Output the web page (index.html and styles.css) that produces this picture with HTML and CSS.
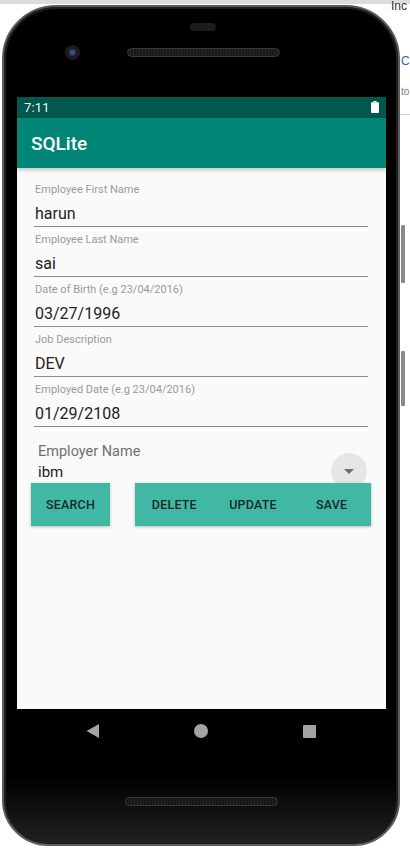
FILE: index.html
```html
<!DOCTYPE html>
<html>
<head>
<meta charset="utf-8">
<link rel="stylesheet" href="styles.css">
</head>
<body>
<div class="stage">
  <div class="bg-top"></div>
  <div class="bg-text t1">Inc</div>
  <div class="bg-text t2">C</div>
  <div class="bg-text t3">to</div>
  <div class="bg-rule"></div>
  <div class="phone">
    <div class="side-btn b1"></div>
    <div class="side-btn b2"></div>
    <div class="phone-top">
      <div class="sensor"></div>
      <div class="camera"><div class="lens"></div></div>
      <div class="earpiece"></div>
    </div>
    <div class="screen">
      <div class="statusbar">
        <span class="time">7:11</span>
        <svg class="battery" width="8" height="12" viewBox="0 0 8 12"><rect x="2.5" y="0" width="3" height="1.5" fill="#fff"/><rect x="0" y="1.2" width="8" height="10.8" rx="0.8" fill="#fff"/></svg>
      </div>
      <div class="appbar">SQLite</div>
      <div class="content">
        <div class="field">
          <div class="label">Employee First Name</div>
          <div class="value">harun</div>
        </div>
        <div class="field">
          <div class="label">Employee Last Name</div>
          <div class="value">sai</div>
        </div>
        <div class="field">
          <div class="label">Date of Birth (e.g 23/04/2016)</div>
          <div class="value">03/27/1996</div>
        </div>
        <div class="field">
          <div class="label">Job Description</div>
          <div class="value">DEV</div>
        </div>
        <div class="field">
          <div class="label">Employed Date (e.g 23/04/2016)</div>
          <div class="value">01/29/2108</div>
        </div>
        <div class="spinner">
          <div class="sp-label">Employer Name</div>
          <div class="sp-value">ibm</div>
          <div class="sp-circle"><svg width="10" height="5" viewBox="0 0 10 5"><path d="M0 0 L10 0 L5 5 Z" fill="#6e6e6e"/></svg></div>
        </div>
        <div class="buttons">
          <div class="btn">SEARCH</div>
          <div class="group">
            <div class="btn">DELETE</div>
            <div class="btn">UPDATE</div>
            <div class="btn">SAVE</div>
          </div>
        </div>
      </div>
    </div>
    <div class="navbar">
      <div class="nav-item"><svg width="14" height="14" viewBox="0 0 14 14"><path d="M0.5 7 L13 0 L13 14 Z" fill="#a3a3a3"/></svg></div>
      <div class="nav-item"><div class="home"></div></div>
      <div class="nav-item"><div class="recent"></div></div>
    </div>
    <div class="speaker"></div>
  </div>
</div>
</body>
</html>
```

FILE: styles.css
```css
html, body {
  margin: 0;
  padding: 0;
  background: #ffffff;
  font-family: Roboto, "Noto Sans", sans-serif;
}

.stage {
  position: relative;
  width: 410px;
  height: 852px;
  overflow: hidden;
  padding-top: 5px;
  box-sizing: border-box;
}

.bg-top {
  position: absolute;
  left: 0;
  top: 0;
  width: 410px;
  height: 4px;
  background: #dcdcdc;
}

.bg-text {
  position: absolute;
  font-family: "Liberation Sans", sans-serif;
  color: #333;
  line-height: 1;
}
.t1 { left: 391px; top: 0px; font-size: 12px; }
.t2 { left: 401px; top: 55px; font-size: 12px; color: #3f5f8f; }
.t3 { left: 401px; top: 87px; font-size: 10px; color: #777; }
.bg-rule {
  position: absolute;
  left: 400px;
  top: 114px;
  width: 10px;
  height: 1px;
  background: #ccc;
}

.phone {
  position: relative;
  margin-left: 2px;
  width: 398px;
  height: 841px;
  box-sizing: border-box;
  border: 2px solid #5c5c5c;
  border-radius: 54px 54px 46px 46px;
  background: linear-gradient(to bottom, #000 0%, #000 92%, #141414 97%, #222 100%);
  box-shadow: inset 0 0 0 2px #1e1e1e;
  padding-left: 13px;
}

.side-btn {
  position: absolute;
  right: -7px;
  width: 4px;
  background: #8a8a8a;
  border-radius: 1px;
}
.b1 { top: 218px; height: 58px; }
.b2 { top: 344px; height: 55px; }

.phone-top {
  position: relative;
  height: 90px;
  margin-left: -13px;
}

.sensor {
  position: absolute;
  left: 186px;
  top: 16px;
  width: 26px;
  height: 8px;
  border-radius: 4px;
  background: #1c1c1e;
}

.camera {
  position: absolute;
  left: 61px;
  top: 38px;
  width: 15px;
  height: 15px;
  border-radius: 50%;
  background: #1b1b22;
  display: flex;
  align-items: center;
  justify-content: center;
}
.lens {
  width: 5px;
  height: 5px;
  border-radius: 50%;
  background: #3b4c8f;
  box-shadow: 0 0 2px #5f73c4;
}

.earpiece {
  position: absolute;
  left: 123px;
  top: 41px;
  width: 153px;
  height: 9px;
  border-radius: 5px;
  background: repeating-linear-gradient(90deg, #1a1a1a 0 2px, #262626 2px 3px);
  border: 1px solid #3a3a3a;
  box-sizing: border-box;
}

.screen {
  width: 369px;
  height: 612px;
  background: #fafafa;
  display: flex;
  flex-direction: column;
}

.statusbar {
  height: 21px;
  background: #00574b;
  display: flex;
  align-items: center;
  justify-content: space-between;
  padding: 0 7px;
}
.time {
  color: #eef5f3;
  font-size: 13px;
  letter-spacing: 0.2px;
}
.battery { display: block; margin-top: -1px; }

.appbar {
  height: 50px;
  background: #008577;
  color: #ffffff;
  font-size: 19px;
  font-weight: 500;
  display: flex;
  align-items: center;
  padding-left: 14px;
  box-shadow: 0 2px 4px rgba(0,0,0,0.22);
  position: relative;
  z-index: 1;
}

.content {
  flex: 1;
  padding: 14px 18px 0 17px;
}

.field {
  margin-bottom: 5px;
  border-bottom: 1px solid #8a8a8a;
}
.label {
  height: 16px;
  line-height: 16px;
  font-size: 11px;
  color: #9a9a9a;
  padding-left: 1px;
}
.value {
  margin-top: 4px;
  height: 24px;
  line-height: 24px;
  font-size: 16px;
  color: #222222;
  padding-left: 1px;
}

.spinner {
  position: relative;
  margin-top: 16px;
  padding-left: 4px;
  height: 40px;
}
.sp-label {
  height: 18px;
  line-height: 18px;
  font-size: 14.5px;
  color: #6f6f6f;
}
.sp-value {
  margin-top: 2px;
  height: 18px;
  line-height: 18px;
  font-size: 15px;
  color: #222;
}
.sp-circle {
  position: absolute;
  left: 297px;
  top: 10px;
  width: 36px;
  height: 36px;
  border-radius: 50%;
  background: #e6e6e6;
  display: flex;
  align-items: center;
  justify-content: center;
}
.sp-circle svg { display: block; margin-top: 1px; }

.buttons {
  position: relative;
  z-index: 2;
  display: flex;
  margin-left: -3px;
  margin-right: -3px;
  gap: 25px;
}
.group {
  display: flex;
  flex-shrink: 0;
  box-shadow: 0 1px 3px rgba(0,0,0,0.25);
}
.btn {
  flex-shrink: 0;
  width: 79px;
  height: 43px;
  background: #40b8a4;
  color: #1c2a27;
  font-size: 12.5px;
  font-weight: 500;
  letter-spacing: 0.2px;
  display: flex;
  align-items: center;
  justify-content: center;
}
.buttons > .btn {
  box-shadow: 0 1px 3px rgba(0,0,0,0.25);
}
.group .btn {
  width: 78.7px;
}

.navbar {
  display: grid;
  grid-template-columns: 108px 108px 108px;
  padding-left: 22px;
  height: 44px;
  width: 369px;
  box-sizing: border-box;
}
.nav-item {
  display: flex;
  align-items: center;
  justify-content: center;
}
.nav-item svg { display: block; }
.home {
  width: 14px;
  height: 14px;
  border-radius: 50%;
  background: #a3a3a3;
}
.recent {
  width: 13px;
  height: 13px;
  border-radius: 1px;
  background: #a3a3a3;
}

.speaker {
  margin: 44px 0 0 108px;
  width: 153px;
  height: 9px;
  border-radius: 5px;
  background: repeating-linear-gradient(90deg, #1a1410 0 2px, #2a2420 2px 3px);
  border: 1px solid #3a3a3a;
  box-sizing: border-box;
}
```
